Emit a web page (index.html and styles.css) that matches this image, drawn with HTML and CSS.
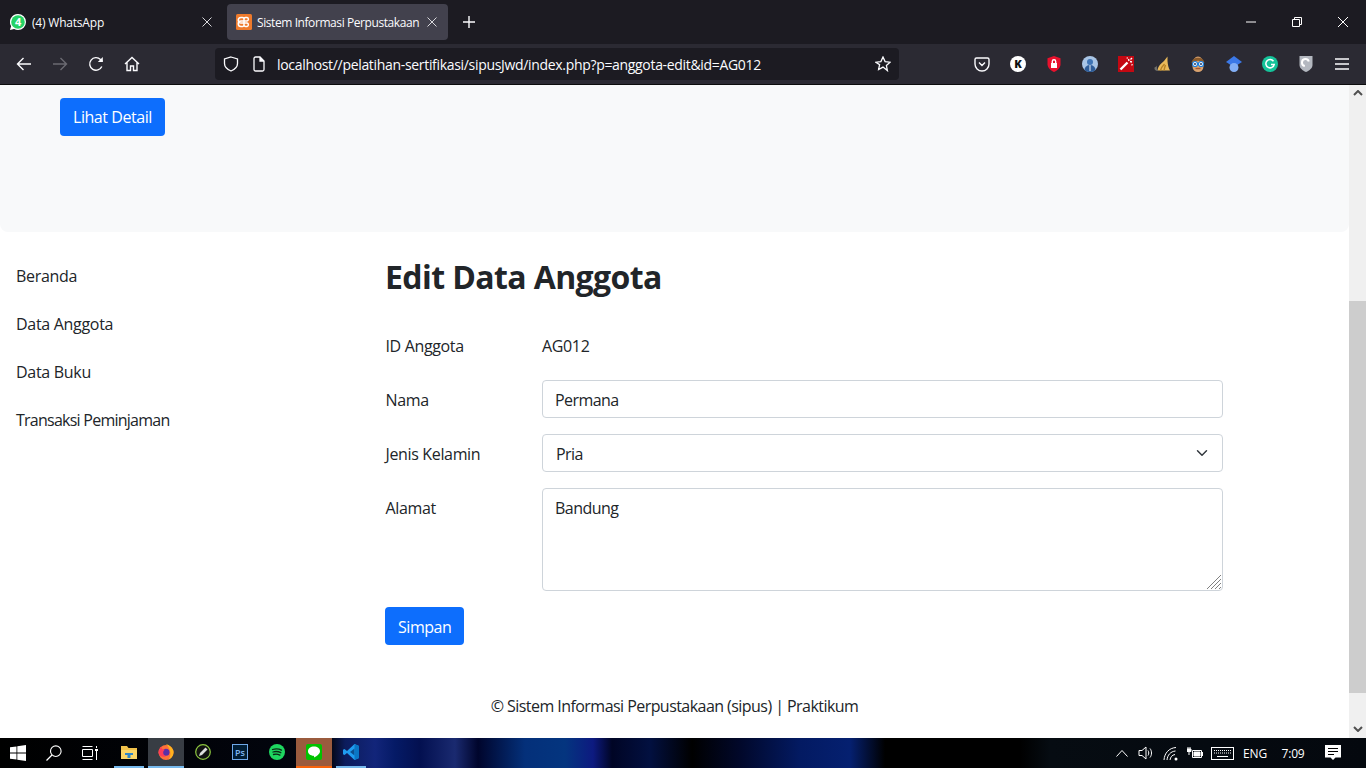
FILE: index.html
```html
<!DOCTYPE html>
<html lang="en">
<head>
    <meta charset="UTF-8">
    <meta name="viewport" content="width=device-width, initial-scale=1.0">
    <title>Sistem Informasi Perpustakaan</title>
    <link rel="stylesheet" href="styles.css">
</head>
<body>
    <!-- Browser tabs -->
    <div class="tabbar">
        <div class="tab">
            <svg class="favicon" viewBox="0 0 16 16"><path d="M8 0a8 8 0 0 1 0 16c-1.400 0-2.700-.4-3.900-1L0 16l1.100-3.900A8 8 0 0 1 8 0z" fill="#fff"/><circle cx="8" cy="8" r="6.800" fill="#25d366"/><text x="8" y="12" class="wa-count">4</text></svg>
            <span class="tab-title">(4) WhatsApp</span>
            <svg class="tab-close" viewBox="0 0 10 10"><path d="M.5.500l9 9m0-9l-9 9"/></svg>
        </div>
        <div class="tab tab-active">
            <svg class="favicon" viewBox="0 0 16 16"><rect width="16" height="16" rx="1.500" fill="#ee7a2c"/><path d="M5 3.500h1.500a1.500 1.500 0 0 1 1.500 1.500v6a1.500 1.500 0 0 0 1.500 1.500H11A1.800 1.800 0 0 0 11 9H5a1.800 1.800 0 0 1 0-5.500zM11 3.500H9.500A1.500 1.500 0 0 0 8 5v6a1.500 1.500 0 0 1-1.500 1.500H5A1.800 1.800 0 0 1 5 7h6a1.800 1.800 0 0 0 0-3.500z" fill="none" stroke="#fff" stroke-width="1.500"/></svg>
            <span class="tab-title">Sistem Informasi Perpustakaan</span>
            <svg class="tab-close" viewBox="0 0 10 10"><path d="M.5.500l9 9m0-9l-9 9"/></svg>
        </div>
        <div class="new-tab">
            <svg viewBox="0 0 12 12" width="12" height="12"><path d="M6 0v12M0 6h12" stroke="#fbfbfe" stroke-width="1.400" fill="none"/></svg>
        </div>
        <div class="window-controls">
            <div class="win-btn"><svg viewBox="0 0 10 10" width="10" height="10"><path d="M0 5h10"/></svg></div>
            <div class="win-btn"><svg viewBox="0 0 10 10" width="10" height="10"><path d="M.5 2.500h7v7h-7zM2.500 2.500v-2h7v7h-2"/></svg></div>
            <div class="win-btn"><svg viewBox="0 0 10 10" width="10" height="10"><path d="M0 0l10 10M10 0L0 10"/></svg></div>
        </div>
    </div>

    <!-- Browser toolbar -->
    <div class="toolbar">
        <div class="tool"><svg viewBox="0 0 16 16"><path d="M15 8H1.500M7.500 2l-6 6 6 6"/></svg></div>
        <div class="tool tool-off"><svg viewBox="0 0 16 16"><path d="M1 8h13.500M8.500 2l6 6-6 6"/></svg></div>
        <div class="tool"><svg viewBox="0 0 16 16"><path d="M13.800 10.500A6.300 6.300 0 1 1 12.500 3.500L14.500 5.500"/><path d="M14.800 1v5h-5z" fill="#fbfbfe" stroke="none"/></svg></div>
        <div class="tool"><svg viewBox="0 0 16 16"><path d="M1 8l7-6.500L15 8M3 6.500V14.500h3.500V10h3v4.500H13V6.500"/></svg></div>
        <div class="urlbar">
            <svg class="url-icon" viewBox="0 0 16 16"><path d="M8 1l6.500 2v4.500c0 3.500-3 6-6.500 7.500-3.500-1.500-6.500-4-6.500-7.500V3z"/></svg>
            <svg class="url-icon url-doc" viewBox="0 0 16 16"><path d="M3 2.500A1.500 1.500 0 0 1 4.500 1h4.500l4 4v8.500a1.500 1.500 0 0 1-1.500 1.500h-7A1.500 1.500 0 0 1 3 13.500z"/><path d="M9 1v4h4" fill="#fbfbfe"/></svg>
            <span class="url-text">localhost//pelatihan-sertifikasi/sipusJwd/index.php?p=anggota-edit&amp;id=AG012</span>
            <svg class="url-icon url-star" viewBox="0 0 16 16"><path d="M8 1l2.100 4.600 5 .6-3.700 3.400 1 5L8 11.100l-4.400 2.500 1-5L.9 6.200l5-.6z"/></svg>
        </div>
        <div class="addons">
            <div class="tool"><svg viewBox="0 0 16 16"><path d="M2.500 2h11A1.500 1.500 0 0 1 15 3.500V8A7 7 0 0 1 1 8V3.500A1.500 1.500 0 0 1 2.500 2zM5 6.500L8 9.500l3-3"/></svg></div>
            <div class="tool"><svg viewBox="0 0 16 16" class="addon"><circle cx="8" cy="8" r="8" fill="#fff"/><text x="8" y="12" class="addon-k">K</text></svg></div>
            <div class="tool"><svg viewBox="0 0 16 16" class="addon"><path d="M8 0l6.500 2.200v6C14.500 12 11 14.500 8 16c-3-1.500-6.500-4-6.500-7.800v-6z" fill="#e8112d"/><path d="M5 7h6v5H5z" fill="#fff"/><path d="M6.300 7V5.500a1.700 1.700 0 0 1 3.400 0V7" fill="none" stroke="#fff"/></svg></div>
            <div class="tool"><svg viewBox="0 0 16 16" class="addon"><circle cx="8" cy="8" r="8" fill="#a9c5e6"/><circle cx="8" cy="6" r="3" fill="#3f74b5"/><path d="M2.500 14a5.500 5 0 0 1 11 0A8 8 0 0 1 2.500 14z" fill="#2f5d99"/><path d="M7.500 9h1v6h-1z" fill="#e6eef8"/></svg></div>
            <div class="tool"><svg viewBox="0 0 16 16" class="addon"><rect width="16" height="16" fill="#c40812"/><path d="M2.500 13.500L9.500 6.500" stroke="#fff" stroke-width="2.400"/><path d="M10.500 3l.5 2M12 5.500l2 .5M12.500 3.500l1.500-1.500M9 1.500l.5 1M13.500 8.500l1 .5" stroke="#fff" fill="none"/></svg></div>
            <div class="tool"><svg viewBox="0 0 16 16" class="addon"><path d="M3.500 14.500C4 10 7 7.500 10 5L13.500.5V5c.3 4 1 7 2.500 9.500z" fill="#eab95a"/><path d="M6.500 14.500C7 12 8.500 10 10.500 8M10 14.500c.3-2 .8-3.500 1.500-5.500" stroke="#b98224" fill="none"/><path d="M4 15C1.500 15 0 13.500.5 11.500 1.500 11 2.500 10.500 3 9.500c-.3 2 0 3.500 1 5.500z" fill="#6f6f6c"/></svg></div>
            <div class="tool"><svg viewBox="0 0 16 16" class="addon"><path d="M2.500 8a5.500 7.500 0 0 1 11 0v2.500a5.500 5.500 0 0 1-11 0z" fill="#d9a26e"/><path d="M1.500 7C2 0 14 0 14.500 7 11 4 5 4 1.500 7z" fill="#8a5a2b"/><circle cx="5" cy="8" r="2.500" fill="#fff" stroke="#1c7fe0" stroke-width="1.200"/><circle cx="11" cy="8" r="2.500" fill="#fff" stroke="#1c7fe0" stroke-width="1.200"/><circle cx="5" cy="8" r=".9" fill="#124"/><circle cx="11" cy="8" r=".9" fill="#124"/><path d="M5.500 12.500h5" stroke="#a5552f"/></svg></div>
            <div class="tool"><svg viewBox="0 0 16 16" class="addon"><path d="M8 0l8 6-8 5-8-5z" fill="#3b78e7"/><circle cx="8" cy="11.500" r="4.500" fill="#82aef5"/></svg></div>
            <div class="tool"><svg viewBox="0 0 16 16" class="addon"><circle cx="8" cy="8" r="8" fill="#15c39a"/><path d="M11.500 5.200A4.200 4.200 0 1 0 12.200 8.500H9" fill="none" stroke="#fff" stroke-width="1.500"/></svg></div>
            <div class="tool"><svg viewBox="0 0 16 16" class="addon"><path d="M1.500 0h13v9c0 3-3 5.500-6.500 7C4.500 14.500 1.500 12 1.500 9z" fill="#b4b8c0"/><path d="M10.800 5.500a3.500 3.500 0 1 0-4 4.500" fill="none" stroke="#fff" stroke-width="2"/></svg></div>
            <div class="tool"><svg viewBox="0 0 16 16"><path d="M1 3h14M1 8h14M1 13h14"/></svg></div>
        </div>
    </div>

    <!-- Page inside the browser -->
    <div class="viewport">
        <div class="page">
            <div class="hero">
                <a class="btn" href="#">Lihat Detail</a>
            </div>
            <div class="layout">
                <nav class="side">
                    <a href="#">Beranda</a>
                    <a href="#">Data Anggota</a>
                    <a href="#">Data Buku</a>
                    <a class="side-long" href="#">Transaksi Peminjaman</a>
                </nav>
                <main class="main">
                    <h1>Edit Data Anggota</h1>
                    <form class="form">
                        <label>ID Anggota</label>
                        <div class="static">AG012</div>
                        <label>Nama</label>
                        <input class="control" type="text" value="Permana">
                        <label>Jenis Kelamin</label>
                        <select class="control control-select"><option>Pria</option><option>Wanita</option></select>
                        <label>Alamat</label>
                        <div class="area-wrap">
                            <textarea class="control control-area">Bandung</textarea>
                            <svg class="grip" viewBox="0 0 14 14"><path d="M0 14L14 0M4 14L14 4M8 14l6-6M12 14l2-2"/></svg>
                        </div>
                        <div class="form-actions"><button class="btn" type="button">Simpan</button></div>
                    </form>
                </main>
            </div>
            <footer class="footer">© Sistem Informasi Perpustakaan (sipus) | Praktikum</footer>
        </div>
        <div class="scrollbar">
            <svg class="scroll-arrow" viewBox="0 0 10 6"><path d="M1 5l4-4 4 4"/></svg>
            <div class="scroll-space-top"></div>
            <div class="scroll-thumb"></div>
            <div class="scroll-space-bottom"></div>
            <svg class="scroll-arrow" viewBox="0 0 10 6"><path d="M1 1l4 4 4-4"/></svg>
        </div>
    </div>

    <!-- Windows taskbar -->
    <div class="taskbar">
        <div class="task-btn"><svg viewBox="0 0 16 16"><path d="M0 2.300l6.500-.9v6.200H0zM7.300 1.300L16 0v7.600H7.300zM0 8.400h6.500v6.200L0 13.700zM7.300 8.400H16V16l-8.700-1.300z" fill="#fff"/></svg></div>
        <div class="task-btn"><svg viewBox="0 0 16 16"><circle cx="9.800" cy="6.200" r="5.300" fill="none" stroke="#fff" stroke-width="1.100"/><path d="M6 10l-5.500 5.500" stroke="#fff" stroke-width="1.300"/></svg></div>
        <div class="task-btn task-gap"><svg viewBox="0 0 16 16" fill="none" stroke="#fff"><path d="M.5 4.500h10v7H.5zM.5 1.500h10M.5 14.500h10M14.500 1v2M14.500 6v9"/><path d="M13 4h3v2h-3z" fill="#fff" stroke="none"/></svg></div>

        <div class="task-app task-open"><svg viewBox="0 0 16 16"><path d="M0 2h6l1.500 2H16v11H0z" fill="#f0c14b"/><path d="M0 6h16v9H0z" fill="#fbd667"/><path d="M4 9h8v2H9.500v3h-3v-3H4z" fill="#2f86c9"/></svg></div>
        <div class="task-app task-active"><svg viewBox="0 0 16 16"><circle cx="8" cy="8.500" r="7.500" fill="#ff7139"/><path d="M8 0c3.500 1 6.500 3.500 7.500 7 .5 3.500-1.500 7.500-5 8.500C14 11 12.500 4.500 8 0z" fill="#ffb21e"/><circle cx="8" cy="8.300" r="3.500" fill="#5b2fa8"/><path d="M.5 9c0-3 1.500-5.500 3-6.500-.5 2 1 3 3.500 3.200C4.500 6.500 4.500 11 8 12.500 4 13.500 1 11.500.5 9z" fill="#ff3d57"/></svg></div>
        <div class="task-app"><svg viewBox="0 0 16 16"><circle cx="8" cy="8" r="7.300" fill="#111" stroke="#8cc63f" stroke-width="1.200"/><path d="M4 12l1-3 5.500-5.500 2 2L7 11z" fill="#ddd"/></svg></div>
        <div class="task-app"><svg viewBox="0 0 16 16"><rect x=".5" y=".5" width="15" height="15" fill="#001d34" stroke="#6fa8e8"/><text x="8" y="11.500" class="ps-text">Ps</text></svg></div>
        <div class="task-app"><svg viewBox="0 0 16 16"><circle cx="8" cy="8" r="8" fill="#1ed760"/><path d="M3.500 5.500c3-1 6.500-.8 9 .6M4 8c2.700-.8 5.500-.5 7.800.7M4.500 10.500c2.200-.6 4.500-.4 6.400.6" fill="none" stroke="#0b2a16" stroke-width="1.300" stroke-linecap="round"/></svg></div>
        <div class="task-app task-flash"><svg viewBox="0 0 16 16"><rect width="16" height="16" rx="2" fill="#00c300"/><path d="M8 2.500c3.300 0 6 2 6 4.700 0 2.600-3.500 5-6 6.300.2-1 .2-1.500-.5-1.700C4.500 11.500 2 9.700 2 7.200 2 4.500 4.700 2.500 8 2.500z" fill="#fff"/></svg></div>
        <div class="task-app task-open"><svg viewBox="0 0 16 16"><path d="M11.500 0L16 2v12l-4.500 2L4 9 1.500 11 0 10.200V5.800L1.500 5 4 7z" fill="#1f9cf0"/><path d="M11.500 4.500L7 8l4.500 3.500z" fill="#0b4f8f"/><path d="M11.500 0L16 2v12l-4.500 2z" fill="#0a76c4"/></svg></div>

        <div class="tray">
            <div class="tray-item tray-chevron"><svg viewBox="0 0 12 7" width="12" height="7"><path d="M.5 6.500l5.500-6 5.500 6"/></svg></div>
            <div class="tray-item tray-sound"><svg viewBox="0 0 16 16" width="16" height="16"><path d="M1 5.500h3L8 2v12l-4-3.500H1zM10 5.500c1 1.500 1 3.500 0 5M12 3.500c2 2.500 2 6.500 0 9"/></svg></div>
            <div class="tray-item tray-wifi"><svg viewBox="0 0 16 16" width="16" height="16"><path d="M1 15C1.500 8 6 3 13 2.500M4 15c.5-5 3.500-8.500 8.500-9M7 15c.5-3 2-5 5-5.500"/><circle cx="13" cy="14" r="1.500" fill="#fff" stroke="none"/></svg></div>
            <div class="tray-item tray-battery"><svg viewBox="0 0 16 12" width="16" height="12"><path d="M5.500 3.500h9v7h-9z"/><path d="M7 5h6v4H7zM14.500 5.500h1.500v3h-1.500zM0 2h4v2.500H0zM2 4.500V8M1 0v2M3 0v2" fill="#fff"/></svg></div>
            <div class="tray-item tray-keyboard"><svg viewBox="0 0 23 13" width="23" height="13"><rect x=".5" y=".5" width="22" height="12"/><path d="M3 3.500h17M3 6h17" stroke-dasharray="1 1"/><path d="M6 9.500h11"/></svg></div>
            <div class="tray-item tray-lang">ENG</div>
            <div class="tray-item tray-time">7:09</div>
            <div class="tray-item tray-notif"><svg viewBox="0 0 16 16" width="16" height="16"><path d="M0 0h16v12.500H10.500L8 15l-2.500-2.500H0z" fill="#fff" stroke="none"/><path d="M3 3.500h10M3 6.500h10M3 9.500h6" stroke="#000" fill="none"/></svg></div>
        </div>
    </div>
</body>
</html>
```

FILE: styles.css
```css
/* Reset some default styles */
* {
    margin: 0;
    padding: 0;
    box-sizing: border-box;
}

html, body {
    height: 100%;
    overflow: hidden;
}

body {
    display: flex;
    flex-direction: column;
    font-family: 'Open Sans', 'Noto Sans', sans-serif;
    font-size: 16px;
    color: #212529;
    background-color: #fff;
}

/* Browser tabs */
.tabbar {
    display: flex;
    align-items: center;
    height: 44px;
    background-color: #1c1b22;
    color: #fbfbfe;
    flex: none;
}

.tab {
    display: flex;
    align-items: center;
    width: 220px;
    height: 36px;
    padding: 0 8px 0 10px;
    border-radius: 4px;
    font-size: 12px;
    letter-spacing: -0.2px;
}

.tab-active {
    width: 221px;
    margin-left: 7px;
    padding-left: 9px;
    background-color: #42414d;
    letter-spacing: -0.42px;
}

.tab-active .tab-close {
    margin-right: 3px;
}

.favicon {
    width: 16px;
    height: 16px;
    flex: none;
    margin-right: 6px;
}

.tab-active .favicon {
    margin-right: 5px;
}

.wa-count {
    font-size: 11px;
    font-weight: 700;
    fill: #fff;
    text-anchor: middle;
}

.tab-title {
    flex: 1;
    white-space: nowrap;
    overflow: hidden;
}

.tab-close {
    width: 10px;
    height: 10px;
    flex: none;
    fill: none;
    stroke: #d8d8dc;
}

.new-tab {
    display: flex;
    align-items: center;
    justify-content: center;
    width: 42px;
    height: 36px;
}

.window-controls {
    display: flex;
    margin-left: auto;
}

.win-btn {
    display: flex;
    align-items: center;
    justify-content: center;
    width: 46px;
    height: 44px;
}

.win-btn svg {
    fill: none;
    stroke: #fff;
}

/* Browser toolbar */
.toolbar {
    display: flex;
    align-items: center;
    height: 41px;
    padding: 0 6px;
    background-color: #2b2a33;
    border-bottom: 1px solid #0c0c0d;
    flex: none;
}

.tool {
    display: flex;
    align-items: center;
    justify-content: center;
    width: 36px;
    height: 32px;
    flex: none;
}

.tool svg {
    width: 16px;
    height: 16px;
    fill: none;
    stroke: #fbfbfe;
    stroke-width: 1.400;
}

.tool .addon {
    stroke: none;
}

.tool-off svg {
    stroke: #6b6a72;
}

.addon-k {
    font-size: 11px;
    font-weight: 800;
    fill: #111;
    text-anchor: middle;
}

.urlbar {
    display: flex;
    align-items: center;
    width: 684px;
    height: 32px;
    margin-left: 65px;
    padding: 0 8px;
    border-radius: 4px;
    background-color: #1c1b22;
    color: #fbfbfe;
    font-size: 14px;
    letter-spacing: -0.32px;
    flex: none;
}

.url-icon {
    width: 16px;
    height: 16px;
    flex: none;
    fill: none;
    stroke: #fbfbfe;
    stroke-width: 1.300;
}

.url-doc {
    margin-left: 12px;
    margin-right: 10px;
}

.url-text {
    flex: 1;
    white-space: nowrap;
    overflow: hidden;
}

.addons {
    display: flex;
    margin-left: 65px;
}

/* Page inside the browser */
.viewport {
    display: flex;
    flex: 1;
    min-height: 0;
}

.page {
    flex: 1;
    min-width: 0;
    overflow: hidden;
}

.hero {
    height: 147px;
    padding: 13px 60px;
    background-color: #f8f9fa;
    border-radius: 0 0 8px 8px;
}

.btn {
    display: inline-block;
    height: 38px;
    padding: 0 13px;
    border: 0;
    border-radius: 4px;
    background-color: #0d6efd;
    color: #fff;
    font: inherit;
    line-height: 38px;
    text-decoration: none;
    letter-spacing: -0.45px;
}

.layout {
    display: flex;
    padding-top: 20px;
}

.side {
    width: 385px;
    flex: none;
    letter-spacing: -0.3px;
}

.side a {
    display: block;
    padding: 12px 16px;
    line-height: 24px;
    color: #212529;
    text-decoration: none;
}

.side .side-long {
    letter-spacing: -0.75px;
}

.main {
    width: 838px;
    flex: none;
}

h1 {
    height: 74px;
    padding-top: 6px;
    font-size: 32px;
    font-weight: 700;
    line-height: 38px;
    letter-spacing: -0.6px;
}

.form {
    display: grid;
    grid-template-columns: 157px 681px;
    row-gap: 16px;
    letter-spacing: -0.35px;
}

.form label,
.static {
    padding: 8px 0 6px 0.5px;
    line-height: 24px;
}

.static {
    padding-left: 0;
}

.control {
    display: block;
    width: 100%;
    height: 38px;
    padding: 7px 12px 5px;
    border: 1px solid #ced4da;
    border-radius: 4px;
    background-color: #fff;
    color: #212529;
    font: inherit;
    letter-spacing: -0.55px;
    line-height: 24px;
}

.control-select {
    padding-left: 13px;
    appearance: none;
    background-image: url("data:image/svg+xml,%3csvg xmlns='http://www.w3.org/2000/svg' viewBox='0 0 16 16'%3e%3cpath fill='none' stroke='%23343a40' stroke-linecap='round' stroke-linejoin='round' stroke-width='2' d='M2 5l6 6 6-6'/%3e%3c/svg%3e");
    background-repeat: no-repeat;
    background-position: right 14px center;
    background-size: 12px 12px;
}

.control-area {
    height: 103px;
    resize: none;
}

.area-wrap {
    position: relative;
}

/* Resize handle sits over the textarea corner */
.grip {
    position: absolute;
    right: 2px;
    bottom: 2px;
    width: 14px;
    height: 14px;
    fill: none;
    stroke: #808080;
    stroke-width: 1;
}

.form-actions {
    grid-column: 1 / 3;
}

.form-actions .btn {
    padding-top: 1px;
}

.footer {
    padding-top: 49px;
    line-height: 24px;
    text-align: center;
    letter-spacing: -0.55px;
}

/* Custom scrollbar drawn as part of the window */
.scrollbar {
    display: flex;
    flex-direction: column;
    align-items: center;
    width: 17px;
    flex: none;
    background-color: #f0f0f0;
}

.scroll-arrow {
    width: 10px;
    height: 6px;
    margin: 5px 0 6px;
    fill: none;
    stroke: #505050;
    stroke-width: 2;
    flex: none;
}

.scroll-space-top {
    height: 199px;
    flex: none;
}

.scroll-thumb {
    width: 100%;
    height: 392px;
    background-color: #cdcdcd;
    flex: none;
}

.scroll-space-bottom {
    flex: 1;
}

/* Windows taskbar */
.taskbar {
    display: flex;
    align-items: stretch;
    height: 30px;
    color: #fff;
    background: linear-gradient(90deg, #000 0, #02050f 330px, #0c1c5c 345px, #12257a 375px, #051a66 395px, #031050 420px, #1a2a70 455px, #00052c 478px, #04307a 525px, #04357f 565px, #0d1a80 593px, #000525 612px, #021040 650px, #000 692px, #01082a 740px, #031a62 800px, #052070 850px, #000 885px, #000 1020px, #060c12 1050px, #04080e 1366px);
    flex: none;
}

.task-btn {
    display: flex;
    align-items: center;
    justify-content: center;
    width: 36px;
}

.task-gap {
    margin-right: 3px;
}

.task-app {
    display: flex;
    align-items: center;
    justify-content: center;
    width: 36px;
    margin-right: 1px;
    border-bottom: 2px solid transparent;
}

.task-btn svg,
.task-app svg {
    width: 16px;
    height: 16px;
}

.task-open {
    border-image: linear-gradient(90deg, transparent 4px, #76b9ed 4px, #76b9ed 32px, transparent 32px) 1;
}

.task-active {
    background-color: #383d44;
    border-bottom-color: #76b9ed;
}

.task-flash {
    background-color: #9a5b3e;
    border-bottom-color: #f7630c;
}

.ps-text {
    font-size: 9px;
    font-weight: 600;
    fill: #7fb5f0;
    text-anchor: middle;
}

.tray {
    display: flex;
    margin-left: auto;
    padding-right: 14px;
    font-size: 12px;
    letter-spacing: -0.2px;
}

.tray-item {
    display: flex;
    align-items: center;
    justify-content: center;
}

.tray-item svg {
    fill: none;
    stroke: #fff;
}

.tray-chevron { width: 24px; }
.tray-sound { width: 24px; }
.tray-wifi { width: 25px; }
.tray-battery { width: 23px; }
.tray-keyboard { width: 32px; }
.tray-lang { width: 34px; }
.tray-time { width: 42px; }
.tray-notif { width: 38px; }
```
